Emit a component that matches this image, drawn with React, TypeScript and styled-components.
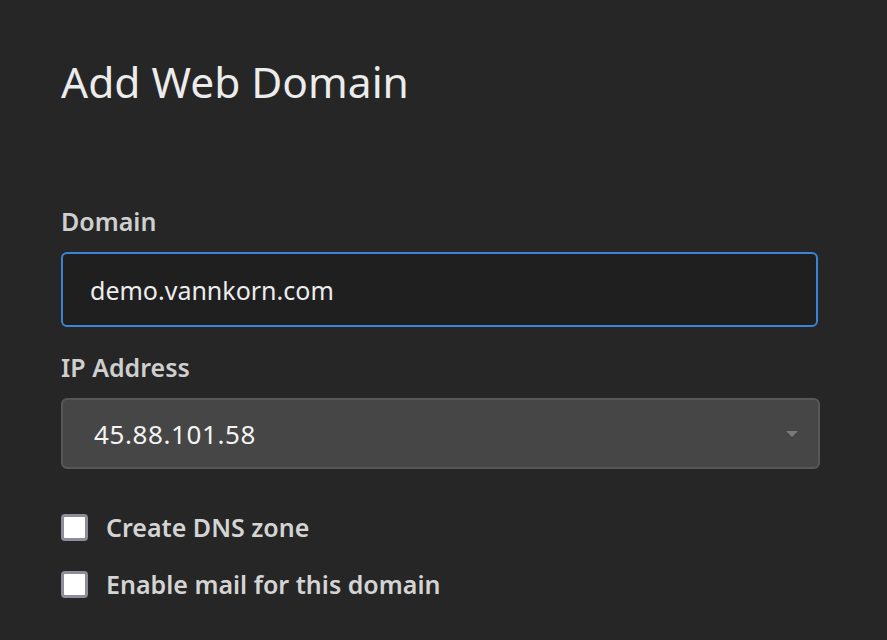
import React from "react";
import styled, { createGlobalStyle } from "styled-components";

const Global = createGlobalStyle`
  html, body { margin: 0; padding: 0; background: #262626; }
  body { font-family: "Noto Sans", "Open Sans", sans-serif; }
  * { box-sizing: border-box; }
`;

const Page = styled.div`
  width: 887px;
  height: 640px;
  background: #262626;
  padding: 52px 68px 0 61px;
  overflow: hidden;
`;

const Title = styled.h1`
  margin: 0 0 91px 0;
  font-size: 42.5px;
  line-height: 60px;
  font-weight: 400;
  color: #ececec;
`;

const Field = styled.div<{ $mb: number }>`
  display: flex;
  flex-direction: column;
  margin-bottom: ${(p) => p.$mb}px;
`;

const Label = styled.label`
  font-size: 25px;
  line-height: 36px;
  font-weight: 600;
  color: #cfcfcf;
  margin-bottom: 13px;
`;

const Input = styled.div`
  height: 75px;
  width: 757px;
  border: 2px solid #3a83d6;
  border-radius: 6px;
  background: #1f1f1f;
  color: #ededed;
  font-size: 25px;
  padding-left: 27px;
  display: flex;
  align-items: center;
`;

const Select = styled.div`
  height: 71px;
  width: 759px;
  border: 2px solid #575757;
  border-radius: 6px;
  background: #464646;
  color: #f4f4f4;
  font-size: 26px;
  letter-spacing: 0.6px;
  padding: 0 20px 0 31px;
  display: flex;
  align-items: center;
  justify-content: space-between;
`;

const Arrow = styled.span`
  width: 0;
  height: 0;
  border-left: 6px solid transparent;
  border-right: 6px solid transparent;
  border-top: 6px solid #7a7a7a;
`;

const CheckRow = styled.div`
  display: flex;
  align-items: center;
  gap: 18px;
  height: 40px;
  margin-bottom: 17px;
`;

const Box = styled.span`
  width: 27px;
  height: 27px;
  border: 3px solid #8f8d9b;
  border-radius: 4px;
  background: #ffffff;
  flex: none;
`;

const CheckText = styled.span`
  font-size: 25px;
  font-weight: 600;
  color: #d4d4d4;
`;

export default function App() {
  return (
    <Page>
      <Global />
      <Title>Add Web Domain</Title>
      <Field $mb={22}>
        <Label>Domain</Label>
        <Input>demo.vannkorn.com</Input>
      </Field>
      <Field $mb={38}>
        <Label>IP Address</Label>
        <Select>
          <span>45.88.101.58</span>
          <Arrow />
        </Select>
      </Field>
      <CheckRow>
        <Box />
        <CheckText>Create DNS zone</CheckText>
      </CheckRow>
      <CheckRow>
        <Box />
        <CheckText>Enable mail for this domain</CheckText>
      </CheckRow>
    </Page>
  );
}
